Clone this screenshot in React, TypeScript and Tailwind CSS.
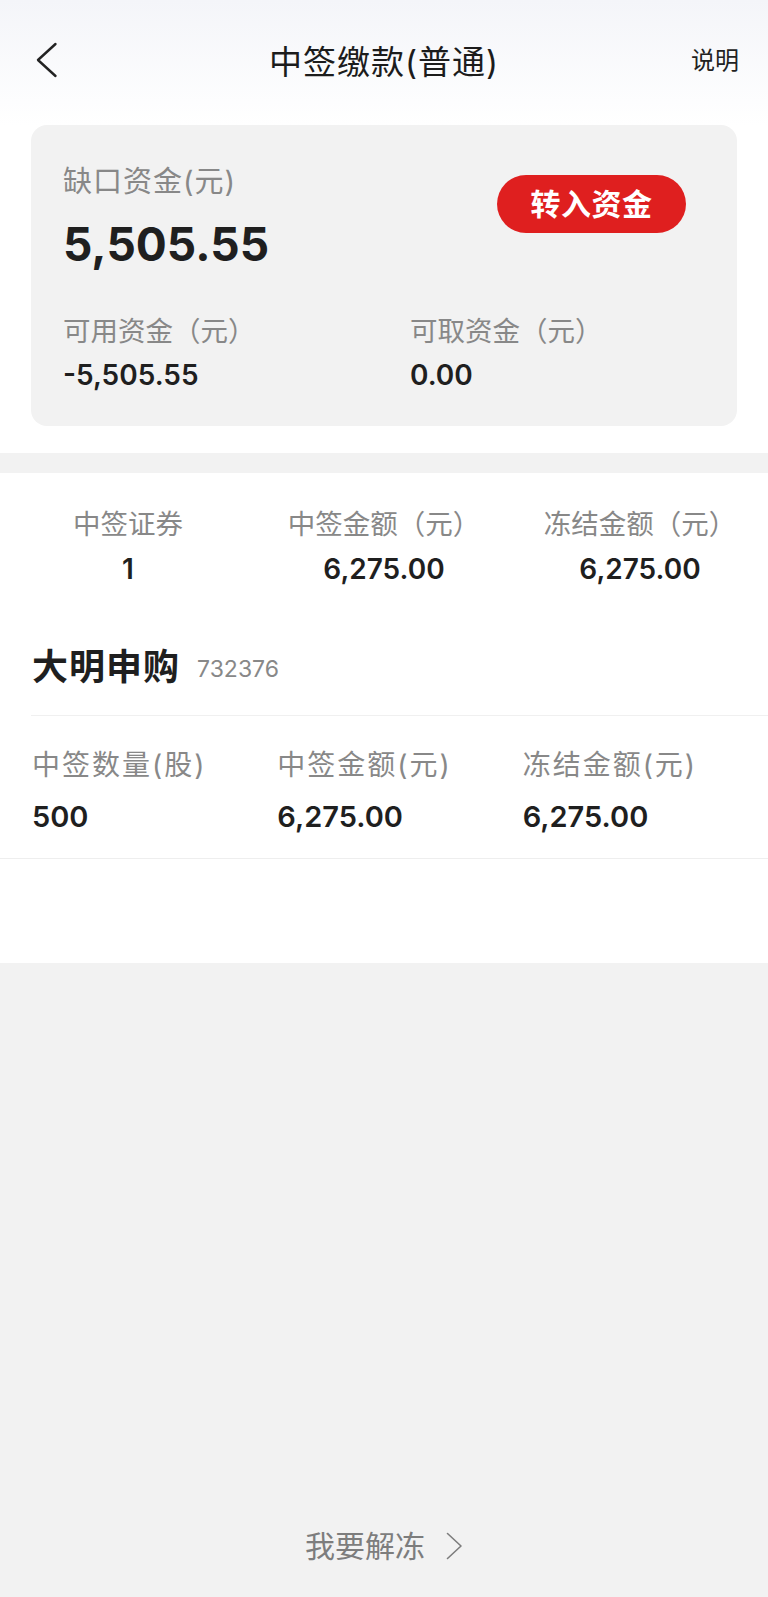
const font = "font-['Inter','Noto_Sans_CJK_SC',sans-serif]";

function Header() {
  return (
    <div className="grid h-[125px] grid-cols-[1fr_auto_1fr] items-center bg-gradient-to-b from-[#f4f5f9] to-white">
      <div className="pl-[36px]">
        <svg width="22" height="36" viewBox="0 0 22 36" fill="none" className="mt-[-5px]">
          <polyline points="19.5,2 2,18 19.5,34" stroke="#222" strokeWidth="2.4" strokeLinecap="round" strokeLinejoin="round" />
        </svg>
      </div>
      <h1 className="text-[33px] leading-[33px] tracking-[1px] text-[#1c1c1c]">中签缴款(普通)</h1>
      <div className="pr-[29px] text-right text-[24px] leading-[24px] text-[#222] mt-[-4px]">说明</div>
    </div>
  );
}

function FundCard() {
  return (
    <div className="bg-white px-[31px] pb-[27px]">
      <div className="rounded-[16px] bg-[#f2f2f2] pl-[32px] pr-[51px] pt-[42px] pb-[37px]">
        <div className="flex items-start justify-between">
          <div>
            <div className="text-[29px] leading-[29px] tracking-[1px] text-[#888]">缺口资金(元)</div>
            <div className="mt-[25px] text-[46px] font-bold leading-[46px] text-[#1f1f1f]">5,505.55</div>
          </div>
          <button className="mt-[8px] flex h-[58px] w-[189px] items-center justify-center rounded-full bg-[#df1f1f] text-[30px] font-bold tracking-[0.5px] text-white">
            转入资金
          </button>
        </div>
        <div className="mt-[51px] flex">
          <div className="w-[347px]">
            <div className="text-[27.5px] leading-[27px] text-[#888]">可用资金（元）</div>
            <div className="mt-[16px] text-[28px] font-semibold leading-[28px] text-[#1f1f1f]">-5,505.55</div>
          </div>
          <div>
            <div className="text-[27.5px] leading-[27px] text-[#888]">可取资金（元）</div>
            <div className="mt-[16px] text-[28px] font-semibold leading-[28px] text-[#1f1f1f]">0.00</div>
          </div>
        </div>
      </div>
    </div>
  );
}

const summary = [
  { label: "中签证券", value: "1" },
  { label: "中签金额（元）", value: "6,275.00" },
  { label: "冻结金额（元）", value: "6,275.00" },
];

const detail = [
  { label: "中签数量(股)", value: "500" },
  { label: "中签金额(元)", value: "6,275.00" },
  { label: "冻结金额(元)", value: "6,275.00" },
];

function Summary() {
  return (
    <div className="grid grid-cols-3 pt-[37px]">
      {summary.map((s) => (
        <div key={s.label} className="text-center">
          <div className="text-[27.5px] leading-[28px] text-[#888]">{s.label}</div>
          <div className="mt-[17px] text-[28px] font-semibold leading-[28px] text-[#1f1f1f]">{s.value}</div>
        </div>
      ))}
    </div>
  );
}

function StockItem() {
  return (
    <div className="mt-[67px]">
      <div className="ml-[31px] flex items-center border-b border-[#f0f0f0] pl-[1px] pb-[30px]">
        <span className="text-[36px] font-bold leading-[35px] tracking-[1px] text-[#1f1f1f]">大明申购</span>
        <span className="ml-[17px] mt-[2px] text-[23px] leading-[24px] text-[#888]">732376</span>
      </div>
      <div className="grid grid-cols-3 border-b border-[#eeeeee] pl-[32px] pt-[35px] pb-[27px]">
        {detail.map((d) => (
          <div key={d.label}>
            <div className="text-[28px] leading-[28px] tracking-[2px] text-[#888]">{d.label}</div>
            <div className="mt-[23px] text-[29px] font-semibold leading-[29px] text-[#1f1f1f]">{d.value}</div>
          </div>
        ))}
      </div>
    </div>
  );
}

export default function App() {
  return (
    <div className={`${font} flex min-h-[1597px] w-[768px] flex-col bg-[#f2f2f2]`}>
      <Header />
      <FundCard />
      <div className="h-[20px] bg-[#f2f2f2]" />
      <div className="h-[490px] bg-white">
        <Summary />
        <StockItem />
      </div>
      <div className="flex flex-1 items-end justify-center pb-[36px]">
        <div className="flex items-center text-[#7d7d7d]">
          <span className="text-[30px] leading-[30px]">我要解冻</span>
          <svg width="17" height="28" viewBox="0 0 17 28" fill="none" className="ml-[21px]">
            <polyline points="1.5,1.5 15,14 1.5,26.5" stroke="#7d7d7d" strokeWidth="1.6" strokeLinecap="round" strokeLinejoin="round" />
          </svg>
        </div>
      </div>
    </div>
  );
}
